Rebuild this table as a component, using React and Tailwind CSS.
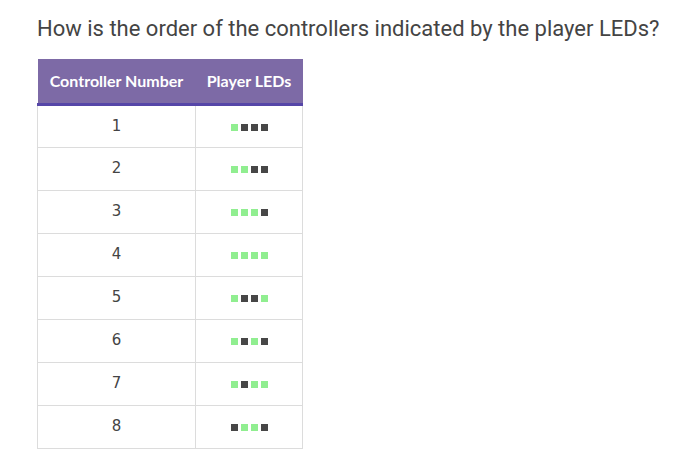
import React from 'react';

const G = 'bg-[#90ee90]';
const D = 'bg-[#474747]';

// 1 = lit (green), 0 = off (dark)
const rows = [
  [1, 0, 0, 0],
  [1, 1, 0, 0],
  [1, 1, 1, 0],
  [1, 1, 1, 1],
  [1, 0, 0, 1],
  [1, 0, 1, 0],
  [1, 0, 1, 1],
  [0, 1, 1, 0],
];

function Leds({ pattern }) {
  return (
    <div className="flex justify-center gap-[3px] pt-[2px]">
      {pattern.map((on, i) => (
        <span key={i} className={`block w-[7px] h-[7px] ${on ? G : D}`} />
      ))}
    </div>
  );
}

export default function App() {
  return (
    <div className="bg-white min-h-[475px] pl-[37px] pt-[14px] font-['Roboto',sans-serif]">
      <h2 className="text-[22px] leading-[30px] text-[#444] font-normal">
        How is the order of the controllers indicated by the player LEDs?
      </h2>

      <table className="mt-[15px] w-[266px] border-collapse">
        <thead>
          <tr className="bg-[#7d6aa6] border-b-[3px] border-[#5646a8] text-white font-['Lato',sans-serif] font-bold text-[16px]">
            <th className="h-[45px] w-[158px] font-bold">Controller Number</th>
            <th className="h-[45px] font-bold">Player LEDs</th>
          </tr>
        </thead>
        <tbody>
          {rows.map((p, i) => (
            <tr key={i} className="h-[43px]">
              <td className="border border-[#dcdcdc] border-t-0 text-center text-[15px] text-[#444] font-['DejaVu_Sans',sans-serif]">
                {i + 1}
              </td>
              <td className="border border-[#dcdcdc] border-t-0">
                <Leds pattern={p} />
              </td>
            </tr>
          ))}
        </tbody>
      </table>
    </div>
  );
}
